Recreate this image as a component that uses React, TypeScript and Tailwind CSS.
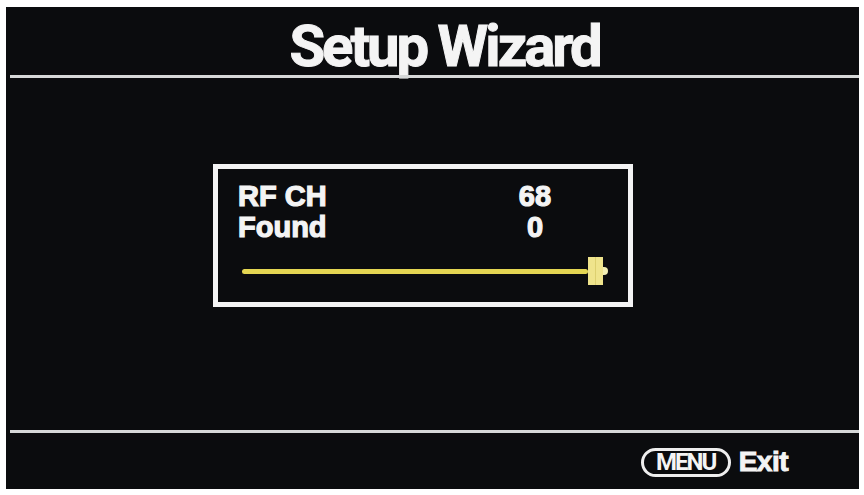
export default function App() {
  return (
    <div className="w-[864px] h-[495px] bg-white pl-[6px] pt-[7px] pr-[5px] pb-[6px]">
      <div className="flex h-full w-full flex-col bg-[#0b0c0e] text-[#f4f4f4]">
        <header className="h-[68px] pl-[24px] pt-[10px] text-center font-['Roboto',sans-serif] text-[58px] font-bold leading-[58px] tracking-[-3px] [-webkit-text-stroke:1px_#f4f4f4]">
          Setup Wizard
        </header>
        <div className="ml-[4px] h-[3px] bg-[#d6d8d8]" />

        <main className="flex-1 pl-[207px] pt-[86px]">
          <div className="h-[143px] w-[420px] border-[5px] border-[#f4f4f4] pl-[20px] pt-[12px] font-['Liberation_Sans',Arial,sans-serif] font-bold [-webkit-text-stroke:1.2px_#f4f4f4]">
            <div className="flex text-[29px] leading-[31px]">
              <span className="w-[267px]">RF CH</span>
              <span className="w-[60px] text-center">68</span>
            </div>
            <div className="flex text-[29px] leading-[31px]">
              <span className="w-[267px]">Found</span>
              <span className="w-[60px] text-center">0</span>
            </div>
            <div className="ml-[4px] mt-[14px] flex h-[28px] w-[366px] items-center">
              <div className="h-[5px] flex-1 rounded-full bg-[#e4d652]" />
              <div className="flex h-[28px] w-[15px] justify-center bg-[#efe48c]">
                <div className="h-full w-[1px] bg-[#ddd070]" />
              </div>
              <div className="h-[8px] w-[5px] rounded-r-sm bg-[#f3efb4]" />
            </div>
          </div>
        </main>

        <div className="ml-[4px] h-[3px] bg-[#d6d8d8]" />
        <footer className="flex h-[56px] items-center justify-end gap-[8px] pr-[71px] pt-[2px]">
          <div className="flex h-[29px] w-[90px] items-center justify-center rounded-full border-[3px] border-[#eeeeee] font-['Roboto',sans-serif] text-[24px] font-bold leading-none tracking-[-2px]">
            MENU
          </div>
          <span className="font-['Liberation_Sans',Arial,sans-serif] text-[28px] font-bold leading-none tracking-[-0.5px] [-webkit-text-stroke:1px_#f4f4f4]">
            Exit
          </span>
        </footer>
      </div>
    </div>
  );
}
